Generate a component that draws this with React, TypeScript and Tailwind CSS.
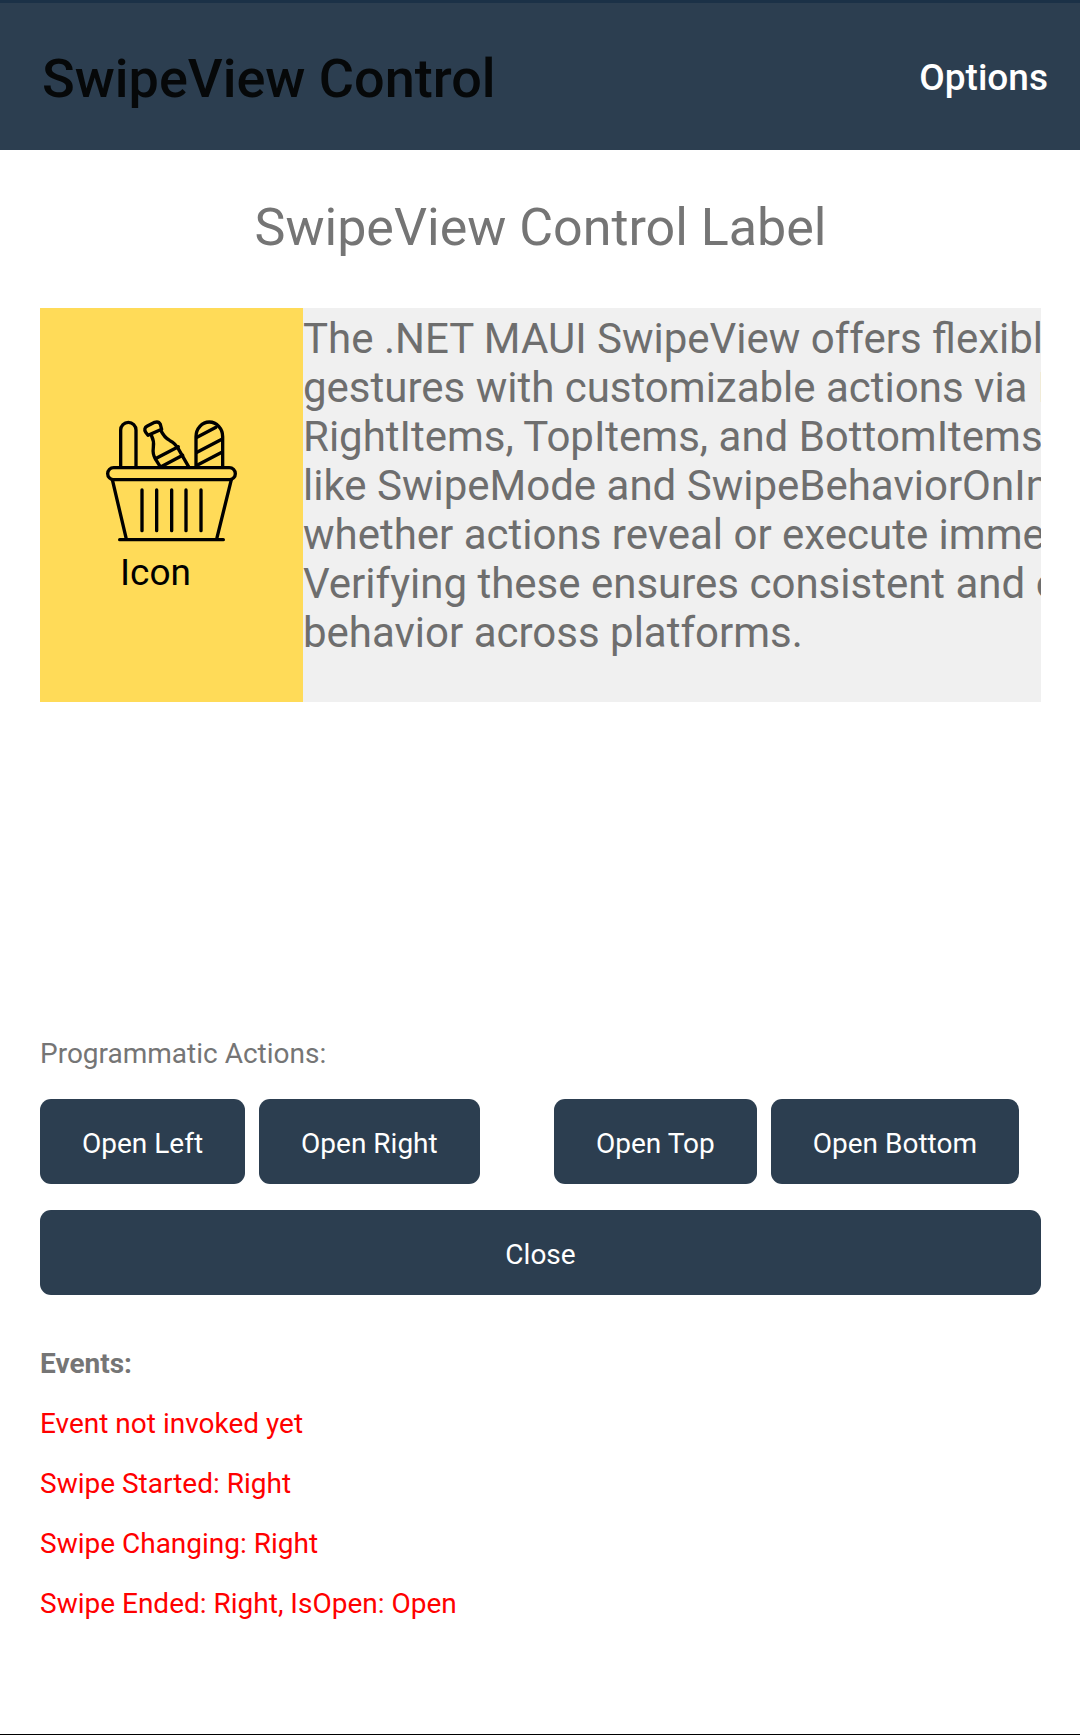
import React from "react";

const BODY_LINES = [
  "The .NET MAUI SwipeView offers flexible swipe",
  "gestures with customizable actions via LeftItems,",
  "RightItems, TopItems, and BottomItems. Properties",
  "like SwipeMode and SwipeBehaviorOnInvoked control",
  "whether actions reveal or execute immediately.",
  "Verifying these ensures consistent and expected",
  "behavior across platforms.",
];

const EVENTS = [
  "Event not invoked yet",
  "Swipe Started: Right",
  "Swipe Changing: Right",
  "Swipe Ended: Right, IsOpen: Open",
];

function BasketIcon() {
  return (
    <svg
      viewBox="45 38 402 372"
      className="h-[124px] w-[134px]"
      fill="none"
      stroke="#000"
      strokeWidth="10"
      strokeLinecap="round"
      strokeLinejoin="round"
      aria-hidden="true"
    >
      <path d="M92 186V74a23 23 0 0 1 46 0v112" />
      <path d="M318 186V94a40 44 0 0 1 80 0v92" />
      <path d="M321 96l57-30M321 141l76-40M321 180l76-40" />
      <path d="M174 90l-7-9q-7-13 5-19l22-11q12-4 17 6l4 15z" />
      <path d="M184 90q9 18 6 36q-3 22 7 36l15 24M212 74q10 22 28 32q15 7 26 26l31 54" />
      <path d="M196 160l69-36M216 183l62-33" />
      <rect x="53" y="187" width="383" height="36" rx="18" />
      <path d="M67 223l41 174M424 223l-43 174M89 403h311" />
      <path d="M156 254v122M200 254v122M245 254v122M288 254v122M333 254v122" />
    </svg>
  );
}

function ActionButton({ children }: { children: React.ReactNode }) {
  return (
    <button
      type="button"
      className="h-[85px] whitespace-nowrap rounded-[11px] bg-[#2c3e50] px-[42px] pt-1 text-[28px] leading-[34px] text-white"
    >
      {children}
    </button>
  );
}

export default function App() {
  return (
    <div className="flex min-h-screen flex-col border-b border-black bg-white font-[Roboto,sans-serif] text-[28px] leading-[34px] text-[#757575]">
      <header className="flex h-[150px] items-center justify-between border-t-[3px] border-[#1b3147] bg-[#2c3e50] pr-8 pl-[42px]">
        <h1 className="pt-1 text-[54px] leading-[62px] font-medium text-[#060809]">SwipeView Control</h1>
        <button type="button" className="pt-[2px] text-[37px] leading-[44px] font-medium text-white">
          Options
        </button>
      </header>

      <main className="flex flex-col pt-[47px] pr-[39px] pl-10">
        <h2 className="text-center text-[52px] leading-[62px]">SwipeView Control Label</h2>

        <section className="mt-[49px] flex h-[394px] overflow-hidden bg-[#f0f0f0]">
          <button
            type="button"
            className="flex w-[263px] shrink-0 flex-col items-center bg-[#ffdb58] pt-[110px] text-[37px] leading-[44px] text-black"
          >
            <BasketIcon />
            <span className="mt-[9px] pr-8">Icon</span>
          </button>
          <p className="pt-[6px] text-[42px] leading-[49px] text-[#6e6e6e]">
            {BODY_LINES.map((line) => (
              <span key={line} className="block whitespace-nowrap">
                {line}
              </span>
            ))}
          </p>
        </section>

        <h3 className="mt-[335px]">Programmatic Actions:</h3>
        <div className="mt-7 grid grid-cols-2 gap-x-[27px] gap-y-[26px]">
          <div className="flex gap-[14px]">
            <ActionButton>Open Left</ActionButton>
            <ActionButton>Open Right</ActionButton>
          </div>
          <div className="flex gap-[14px]">
            <ActionButton>Open Top</ActionButton>
            <ActionButton>Open Bottom</ActionButton>
          </div>
          <div className="col-span-2 grid">
            <ActionButton>Close</ActionButton>
          </div>
        </div>

        <h3 className="mt-[52px] font-bold">Events:</h3>
        <ul className="mt-[26px] flex flex-col gap-[26px] text-[#ff0000]">
          {EVENTS.map((event) => (
            <li key={event}>{event}</li>
          ))}
        </ul>
      </main>
    </div>
  );
}
